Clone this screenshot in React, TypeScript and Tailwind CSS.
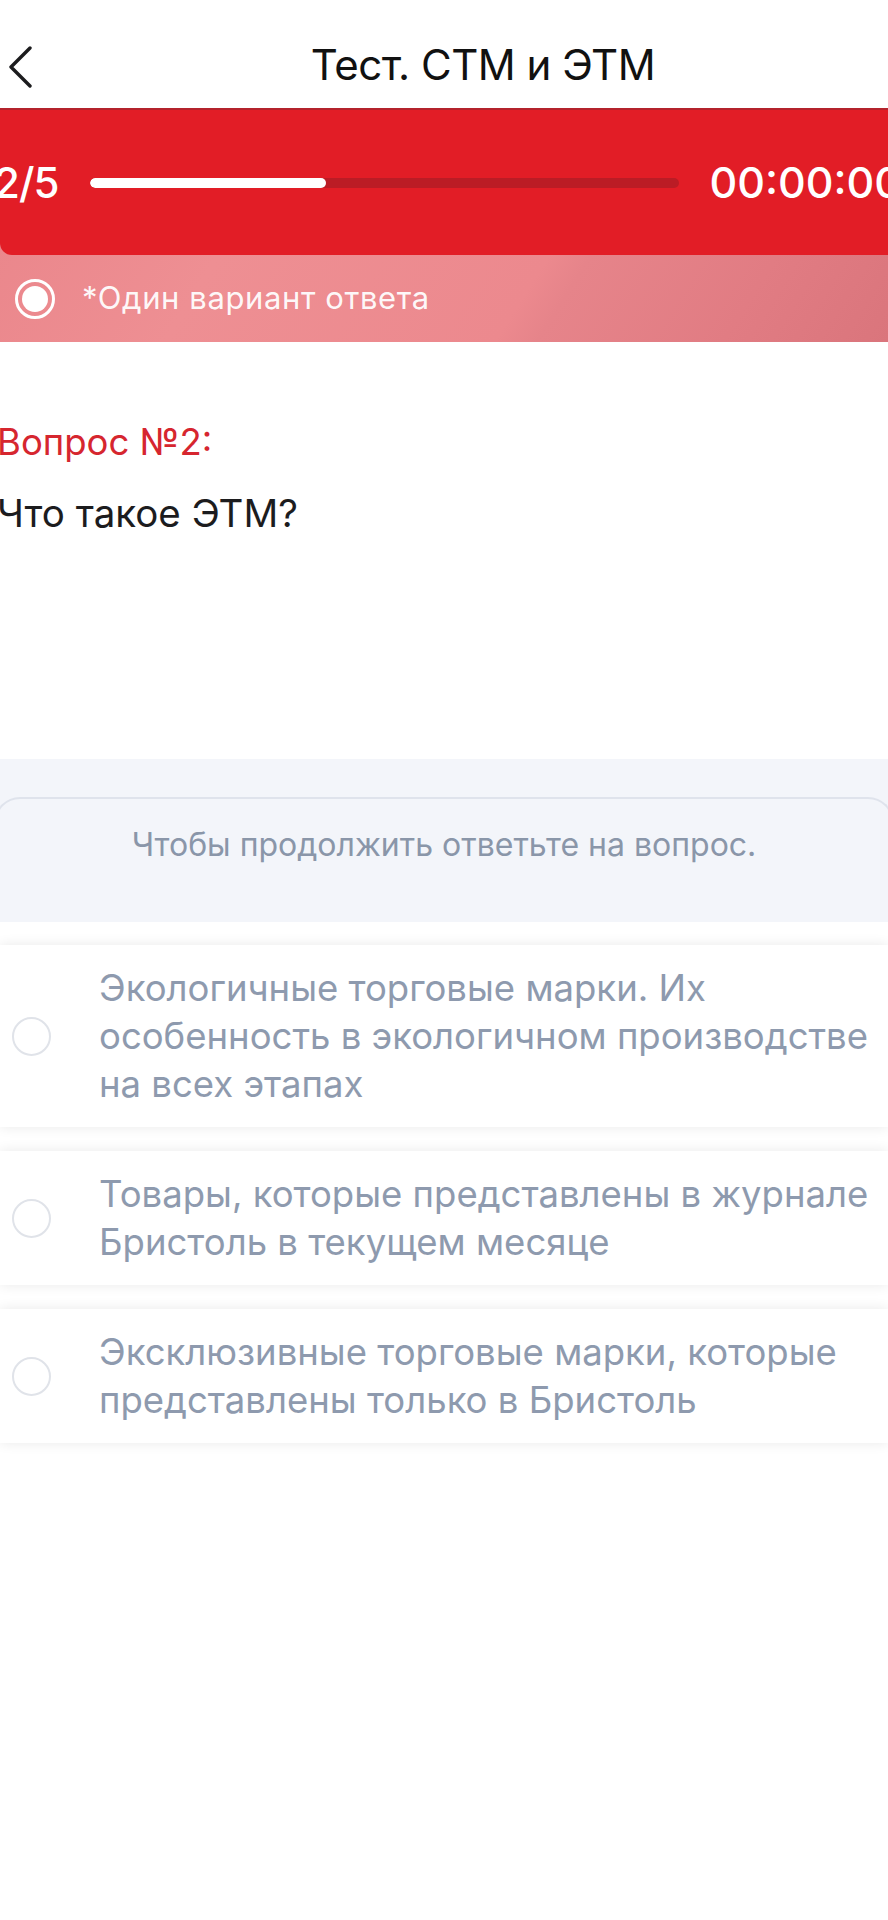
import { ReactNode } from 'react';

const OPTIONS: ReactNode[] = [
  <>
    Экологичные торговые марки. Их
    <br />
    особенность в экологичном производстве
    <br />
    на всех этапах
  </>,
  <>
    Товары, которые представлены в журнале
    <br />
    Бристоль в текущем месяце
  </>,
  <>
    Эксклюзивные торговые марки, которые
    <br />
    представлены только в Бристоль
  </>,
];

function BackIcon() {
  return (
    <svg width="26" height="42" viewBox="0 0 26 42" fill="none">
      <polyline points="22,2 3,21 22,40" stroke="#1c1c1e" strokeWidth="3.4" strokeLinecap="round" strokeLinejoin="round" />
    </svg>
  );
}

function RadioOn() {
  return (
    <svg width="40" height="40" viewBox="0 0 40 40">
      <circle cx="20" cy="20" r="18.5" fill="none" stroke="#fff" strokeWidth="3" />
      <circle cx="20" cy="20" r="13" fill="#fff" />
    </svg>
  );
}

function RadioOff() {
  return <div className="w-[39px] h-[39px] shrink-0 rounded-full border-2 border-[#e0e3e9] bg-white" />;
}

export default function App() {
  return (
    <div className="w-[888px] min-h-[1920px] overflow-hidden bg-white font-['Inter',sans-serif]">
      {/* nav bar */}
      <header className="flex items-center h-[108px] pt-[20px]">
        <div className="ml-[8px] mt-[6px]">
          <BackIcon />
        </div>
        <h1 className="flex-1 text-center pl-[44px] text-[42px] text-[#111] tracking-[-0.5px]">Тест. СТМ и ЭТМ</h1>
      </header>

      {/* progress */}
      <div className="bg-[linear-gradient(122deg,#d96f77_0%,#ea868b_5%,#ee8f93_30%,#ec898e_62%,#e6848a_66%,#e17c83_84%,#da757c_100%)]">
        <div className="h-[147px] bg-[#e21d26] border-t-2 border-[#b4232c] rounded-bl-[12px] flex items-center text-white whitespace-nowrap">
          <span className="ml-[-6px] text-[42px] font-medium tracking-[-1px]">2/5</span>
          <div className="ml-[32px] w-[589px] h-[10px] shrink-0 rounded-full bg-[#bb1c25] overflow-hidden">
            <div className="h-full w-[40%] rounded-full bg-white" />
          </div>
          <span className="ml-[30px] text-[43px] font-medium">00:00:00</span>
        </div>
        <div className="h-[87px] flex items-center pl-[15px]">
          <RadioOn />
          <span className="ml-[27px] text-[31px] text-white/95 tracking-[0.6px]">*Один вариант ответа</span>
        </div>
      </div>

      {/* question */}
      <div className="h-[417px] pt-[79px]">
        <div className="ml-[-3px] text-[36.5px] leading-[42px] text-[#d6262f]">Вопрос №2:</div>
        <div className="ml-[-3px] mt-[27px] text-[38.5px] leading-[46px] text-[#1c1c1e]">Что такое ЭТМ?</div>
      </div>

      {/* hint */}
      <div className="h-[163px] bg-[#f3f5fa] pt-[38px]">
        <div className="mx-[-6px] h-[125px] rounded-t-[26px] border-t-2 border-x-2 border-[#dfe3ec] flex items-center justify-center pb-[32px]">
          <span className="text-[32px] text-[#8a96a9]">Чтобы продолжить ответьте на вопрос.</span>
        </div>
      </div>

      {/* answers */}
      <div className="flex flex-col gap-[24px] pt-[23px]">
        {OPTIONS.map((o, i) => (
          <div key={i} className="flex items-center bg-white py-[19px] shadow-[0_0_12px_rgba(0,0,0,0.09)]">
            <div className="ml-[12px]">
              <RadioOff />
            </div>
            <div className="ml-[48px] text-[36.5px] leading-[48px] text-[#8e9aae] whitespace-nowrap">{o}</div>
          </div>
        ))}
      </div>
    </div>
  );
}
